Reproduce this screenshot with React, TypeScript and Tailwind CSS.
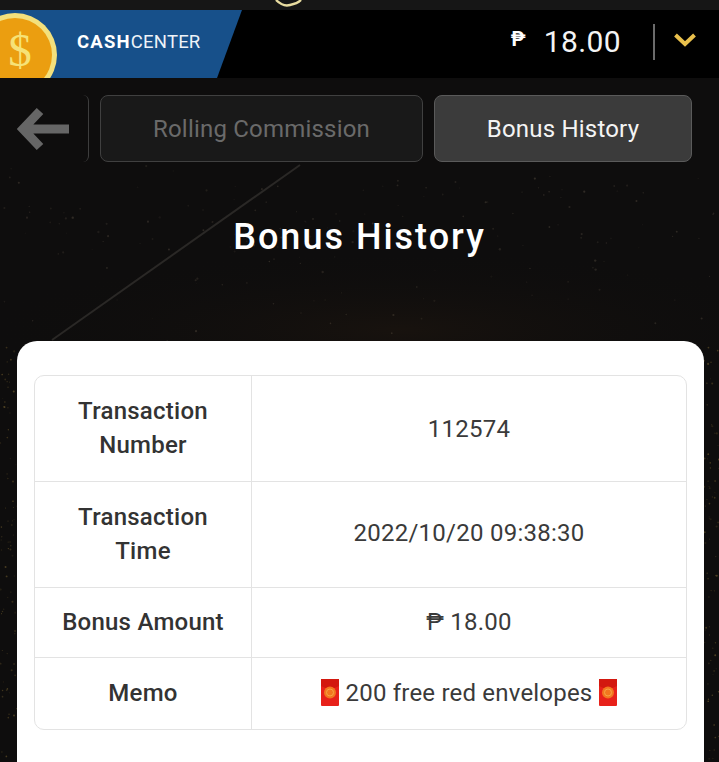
const rows = [
  { label: ["Transaction", "Number"], h: "h-[106px]", value: "112574", pad: "" },
  { label: ["Transaction", "Time"], h: "h-[106px]", value: "2022/10/20 09:38:30", pad: "pb-[4px]" },
  { label: ["Bonus Amount"], h: "h-[70px]", value: "₱ 18.00", pad: "pb-[2px]" },
];

// fixed speckles for the dark backdrop
const rnd = (n: number) => {
  const v = Math.sin(n * 127.1) * 43758.5453;
  return v - Math.floor(v);
};
const dust = Array.from({ length: 170 }, (_, i) => ({
  x: rnd(i + 1) * 719,
  y: 165 + rnd(i + 500) * rnd(i + 900) * 175 + rnd(i + 300) * 60,
  r: 0.5 + rnd(i + 40) * 0.7,
  o: 0.06 + rnd(i + 70) * 0.22,
}));
const edgeDust = Array.from({ length: 150 }, (_, i) => ({
  x: i % 2 === 0 ? rnd(i + 11) * 17 : 704 + rnd(i + 13) * 15,
  y: 345 + rnd(i + 17) * 417,
  r: 0.5 + rnd(i + 19) * 0.6,
  o: 0.1 + rnd(i + 23) * 0.35,
}));

const Envelope = () => (
  <svg width="18" height="27" viewBox="0 0 18 27" className="shrink-0">
    <rect width="18" height="27" rx="1" fill="#e8211a" />
    <path d="M0 0h18v7L9 11 0 7z" fill="#d3180f" />
    <circle cx="9" cy="13.5" r="6" fill="#f2761f" />
    <circle cx="9" cy="13.5" r="3.5" fill="none" stroke="#f5a545" strokeWidth="1" />
  </svg>
);

const Coin = () => (
  <svg width="60" height="68" viewBox="0 0 60 68" className="absolute left-0 top-0">
    <circle cx="15" cy="45" r="42" fill="#f3e07c" />
    <circle cx="15" cy="45" r="37" fill="#eb9e10" />
    <text x="20" y="56" textAnchor="middle" fontFamily="Liberation Serif" fontSize="47" fill="#f6e277">
      $
    </text>
  </svg>
);

export default function App() {
  return (
    <div className="relative h-[762px] w-[719px] overflow-hidden bg-[#0e0d0d] font-['Roboto',sans-serif]">
      {/* background streak + dust */}
      <svg width="719" height="762" viewBox="0 0 719 762" className="absolute left-0 top-0">
        <defs>
          <radialGradient id="glow" cx="50%" cy="50%" r="50%">
            <stop offset="0%" stopColor="#2a1c10" stopOpacity="0.35" />
            <stop offset="100%" stopColor="#0e0d0d" stopOpacity="0" />
          </radialGradient>
        </defs>
        <ellipse cx="400" cy="330" rx="420" ry="80" fill="url(#glow)" />
        <path d="M52 340 L300 165" stroke="#2a2826" strokeWidth="2" />
        {dust.map((d, i) => (
          <circle key={i} cx={d.x} cy={d.y} r={d.r} fill="#8a7a66" opacity={d.o} />
        ))}
        {edgeDust.map((d, i) => (
          <circle key={i} cx={d.x} cy={d.y} r={d.r} fill="#9a7f3c" opacity={d.o} />
        ))}
      </svg>

      <div className="relative">
        <div className="relative h-[10px] bg-[#161616]">
          <svg width="30" height="10" viewBox="0 0 30 10" className="absolute left-[273px] top-0">
            <path d="M3 0 Q10 7 17 5 Q24 4 28 0" fill="none" stroke="#e8dca0" strokeWidth="2.4" />
          </svg>
        </div>

        <div className="relative flex h-[68px] items-center justify-between bg-black">
          <div className="relative flex h-full w-[242px] items-center bg-[#17508a] pb-[2px] pl-[77px] [clip-path:polygon(0_0,100%_0,217px_100%,0_100%)]">
            <Coin />
            <span className="text-[18.5px] tracking-[0.2px] text-[#eef3f8]">
              <span className="font-bold tracking-[1.2px] text-white">CASH</span>CENTER
            </span>
          </div>
          <div className="flex items-center pb-[4px]">
            <span className="mr-[18px] mt-[-6px] text-[20px] font-bold text-white">₱</span>
            <span className="text-[30px] leading-none tracking-[0.4px] text-[#f4f4f4]">18.00</span>
            <div className="ml-[32px] h-[36px] w-[2px] bg-[#6b6b6b]" />
            <svg width="24" height="16" viewBox="0 0 24 16" className="ml-[18px] mr-[22px] mt-[-5px]">
              <path d="M2.5 3 L12 12 L21.5 3" fill="none" stroke="#e9c04c" strokeWidth="4" />
            </svg>
          </div>
        </div>

        <div className="mt-[17px] flex h-[67px] items-stretch">
          <div className="flex w-[89px] items-center rounded-r-[6px] border-r border-[#3d3d3d] pl-[17px]">
            <svg width="52" height="44" viewBox="0 0 52 44">
              <path d="M23 4 L6 22 L23 40 M6 22 H52" fill="none" stroke="#666" strokeWidth="9" />
            </svg>
          </div>
          <button className="ml-[11px] w-[323px] rounded-[8px] border border-[#404040] bg-[#191919] text-[24px] tracking-[0.2px] text-[#6a6a6a]">
            Rolling Commission
          </button>
          <button className="ml-[11px] w-[258px] rounded-[8px] border border-[#5a5a5a] bg-[#3b3b3b] text-[24px] tracking-[0.2px] text-[#f4f4f4]">
            Bonus History
          </button>
        </div>

        <h1 className="mt-[53px] text-center text-[36px] leading-[44px] font-medium tracking-[2px] text-white">
          Bonus History
        </h1>

        <div className="ml-[17px] mr-[15px] mt-[82px] h-[500px] rounded-t-[20px] bg-white px-[17px] pt-[34px]">
          <div className="overflow-hidden rounded-[10px] border border-[#e3e3e3] text-[24px] leading-[34px] tracking-[0.25px] text-[#3a3a3a]">
            {rows.map((row) => (
              <div key={row.value} className={`grid grid-cols-[217px_1fr] border-b border-[#e3e3e3] ${row.h}`}>
                <div className="flex items-center justify-center border-r border-[#e3e3e3] pb-[2px] text-center font-medium text-[#333]">
                  <div>
                    {row.label.map((line) => (
                      <div key={line}>{line}</div>
                    ))}
                  </div>
                </div>
                <div className={`flex items-center justify-center ${row.pad}`}>{row.value}</div>
              </div>
            ))}
            <div className="grid h-[71px] grid-cols-[217px_1fr]">
              <div className="flex items-center justify-center border-r border-[#e3e3e3] pb-[2px] font-medium text-[#333]">
                Memo
              </div>
              <div className="flex items-center justify-center gap-[7px] pb-[2px] tracking-[0.2px]">
                <Envelope />
                <span>200 free red envelopes</span>
                <Envelope />
              </div>
            </div>
          </div>
        </div>
      </div>
    </div>
  );
}
